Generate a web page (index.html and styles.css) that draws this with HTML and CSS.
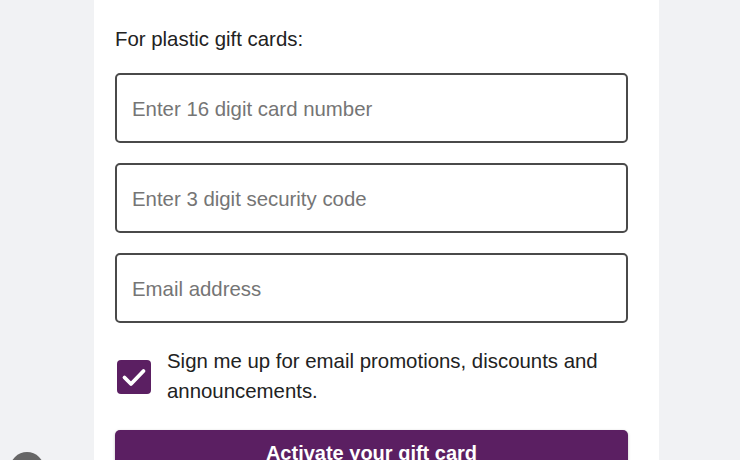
FILE: index.html
```html
<!DOCTYPE html>
<html>
<head>
<meta charset="utf-8">
<link rel="stylesheet" href="styles.css">
</head>
<body>
<main class="panel">
  <p class="intro">For plastic gift cards:</p>
  <form class="form">
    <input class="field" type="text" placeholder="Enter 16 digit card number">
    <input class="field" type="text" placeholder="Enter 3 digit security code">
    <input class="field" type="email" placeholder="Email address">
    <label class="optin">
      <span class="check">
        <svg viewBox="0 0 34 34" width="34" height="34"><path d="M7.5 17.5l6.5 6.5 12.5-13" fill="none" stroke="#fff" stroke-width="3.8" stroke-linecap="round" stroke-linejoin="round"/></svg>
      </span>
      <span class="optin-text">Sign me up for email promotions, discounts and announcements.</span>
    </label>
    <button class="submit" type="button">Activate your gift card</button>
  </form>
</main>
<div class="fab"></div>
</body>
</html>
```
FILE: styles.css
```css
* { box-sizing: border-box; }
html, body { margin: 0; height: 100%; overflow: hidden; }
body {
  background: #f1f2f4;
  font-family: "Liberation Sans", Arial, sans-serif;
  color: #222;
}
.panel {
  margin-left: 94px;
  width: 565px;
  min-height: 100%;
  background: #fff;
  padding: 27px 31px 0 21px;
}
.intro {
  margin: 0 0 22px;
  font-size: 20.4px;
  line-height: 24px;
  color: #222;
}
.form {
  display: flex;
  flex-direction: column;
  gap: 20px;
}
.field {
  width: 100%;
  height: 70px;
  border: 2px solid #4a4a4a;
  border-radius: 5px;
  padding: 2px 15px 0;
  font-family: "Liberation Sans", Arial, sans-serif;
  font-size: 20.4px;
  color: #222;
  background: #fff;
  outline: none;
}
.field::placeholder { color: #757575; }
.optin {
  display: flex;
  align-items: center;
  gap: 16px;
  margin-top: 3px;
  padding-left: 2px;
  font-size: 20.4px;
  line-height: 30px;
  color: #222;
}
.check {
  flex: none;
  width: 34px;
  height: 34px;
  margin-top: 2px;
  background: #5b1f62;
  border-radius: 4px;
  display: flex;
}
.submit {
  margin-top: 4px;
  height: 56px;
  width: 100%;
  border: none;
  border-radius: 5px;
  background: #5b1f62;
  color: #fff;
  font-family: "Liberation Sans", Arial, sans-serif;
  font-weight: bold;
  font-size: 20px;
  line-height: 24px;
  padding-top: 11px;
  text-align: center;
  display: flex;
  justify-content: center;
  align-items: flex-start;
  box-shadow: 0 1px 3px rgba(0,0,0,0.25);
}
.fab {
  position: fixed;
  left: 10px;
  top: 452px;
  width: 34px;
  height: 34px;
  border-radius: 50%;
  background: #666;
}
```
